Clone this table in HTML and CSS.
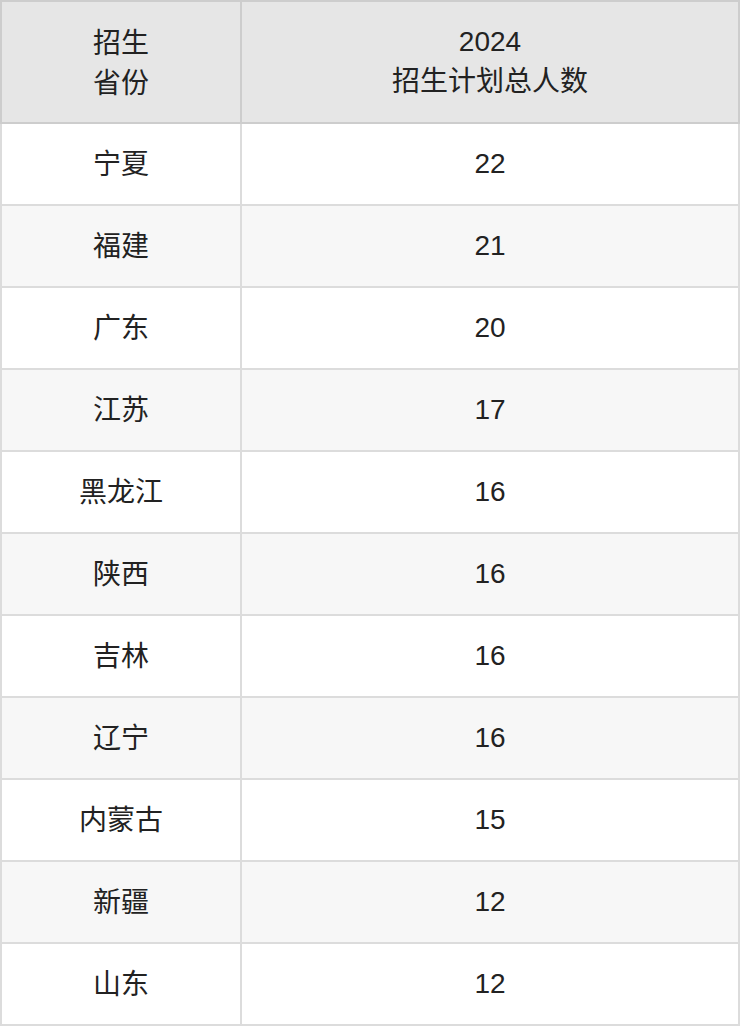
FILE: index.html
```html
<!DOCTYPE html>
<html lang="zh-CN">
<head>
<meta charset="utf-8">
<title>招生计划</title>
<link rel="stylesheet" href="styles.css">
</head>
<body>
<table class="plan">
  <thead>
    <tr>
      <th class="col-prov">招生<br>省份</th>
      <th class="col-num">2024<br>招生计划总人数</th>
    </tr>
  </thead>
  <tbody>
    <tr><td>宁夏</td><td>22</td></tr>
    <tr><td>福建</td><td>21</td></tr>
    <tr><td>广东</td><td>20</td></tr>
    <tr><td>江苏</td><td>17</td></tr>
    <tr><td>黑龙江</td><td>16</td></tr>
    <tr><td>陕西</td><td>16</td></tr>
    <tr><td>吉林</td><td>16</td></tr>
    <tr><td>辽宁</td><td>16</td></tr>
    <tr><td>内蒙古</td><td>15</td></tr>
    <tr><td>新疆</td><td>12</td></tr>
    <tr><td>山东</td><td>12</td></tr>
  </tbody>
</table>
</body>
</html>
```

FILE: styles.css
```css
html, body {
  margin: 0;
  padding: 0;
  background: #ffffff;
}

body {
  font-family: "Liberation Sans", "Noto Sans CJK SC", sans-serif;
  color: #222222;
}

.plan {
  width: 740px;
  border-collapse: separate;
  border-spacing: 0;
  table-layout: fixed;
  font-size: 28px;
}

.plan th,
.plan td {
  padding: 0;
  text-align: center;
  vertical-align: middle;
  font-weight: normal;
  border-right: 2px solid #dcdcdc;
  border-bottom: 2px solid #dcdcdc;
}

.plan th:first-child,
.plan td:first-child {
  border-left: 2px solid #dcdcdc;
}

.col-prov {
  width: 238px;
}

.plan th {
  background: #e6e6e6;
  line-height: 40px;
  padding: 20px 0;
  border-top: 2px solid #cdcdcd;
  border-bottom-color: #cdcdcd;
  border-right-color: #cdcdcd;
}

.plan th:first-child {
  border-left-color: #cdcdcd;
  padding: 22px 0 18px;
}

.plan td {
  line-height: 80px;
}

.plan td:first-child {
  line-height: 78px;
  padding-top: 2px;
}

.plan tbody tr:nth-child(even) td {
  background: #f7f7f7;
}
```
